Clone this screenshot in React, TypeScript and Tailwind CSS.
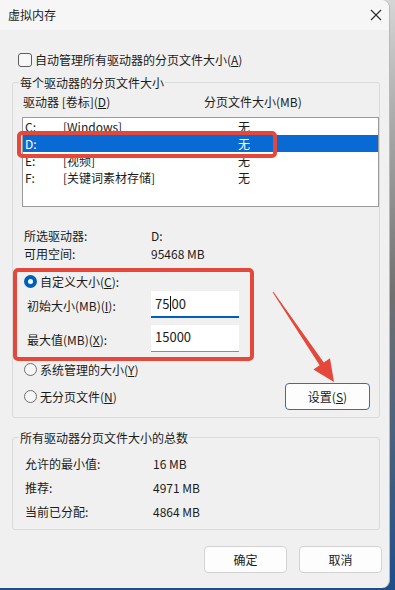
import React from "react";

const font = { fontFamily: '"Noto Sans CJK SC", "Noto Sans", sans-serif' };

function Radio({ checked }: { checked?: boolean }) {
  if (checked) {
    return (
      <span className="flex h-[13px] w-[13px] items-center justify-center rounded-full bg-[#005fb8]">
        <span className="h-[5px] w-[5px] rounded-full bg-white" />
      </span>
    );
  }
  return <span className="h-[13px] w-[13px] rounded-full border border-[#6e6e6e] bg-[#f7f7f7]" />;
}

function Btn({ label, primary }: { label: React.ReactNode; primary?: boolean }) {
  return (
    <div
      className={
        "flex h-[27px] items-center justify-center rounded-[4px] border bg-[#fdfdfd] " +
        (primary ? "w-[85px] border-[#3f6f8e]" : "w-[83px] border-[#d3d3d3]")
      }
    >
      {label}
    </div>
  );
}

const drives = [
  { d: "C:", v: "[Windows]", s: "无" },
  { d: "D:", v: "", s: "无", sel: true },
  { d: "E:", v: "[视频]", s: "无" },
  { d: "F:", v: "[关键词素材存储]", s: "无" },
];

export default function App() {
  return (
    <div className="h-[590px] w-[395px] overflow-hidden bg-gradient-to-b from-[#d6d6d6] via-[#707070] to-[#1d4e89]">
      <div
        className="relative h-[588px] w-[390px] rounded-r-[8px] border-r border-[#b8b8b8] bg-[#f0f0f0] text-[12px] text-[#1b1b1b]"
        style={font}
      >
        {/* title bar */}
        <div className="flex h-[30px] items-center justify-between rounded-tr-[8px] bg-[#f6f6f6] pl-[8px] pr-[5px] text-[12px]">
          <span>虚拟内存</span>
          <svg width="14" height="14" viewBox="0 0 14 14" className="mr-[1px]">
            <path d="M2 2 L12 12 M12 2 L2 12" stroke="#2a2a2a" strokeWidth="1.1" />
          </svg>
        </div>

        {/* auto manage */}
        <div className="ml-[18px] mt-[21px] flex h-[17px] items-center gap-[3px] leading-[17px]">
          <span className="h-[14px] w-[14px] rounded-[3px] border border-[#5c5c5c] bg-[#f7f7f7]" />
          <span>
            自动管理所有驱动器的分页文件大小(<span className="underline">A</span>)
          </span>
        </div>

        {/* group 1 */}
        <div className="relative ml-[12px] mt-[14px] h-[336px] w-[368px] rounded-[3px] border border-[#dadada]">
          <span className="absolute -top-[9px] left-[6px] bg-[#f0f0f0] px-[1px] leading-[17px]">每个驱动器的分页文件大小</span>

          <div className="ml-[10px] mt-[11px] flex h-[16px] items-center leading-[16px]">
            <span className="w-[181px]">
              驱动器 [卷标](<span className="underline">D</span>)
            </span>
            <span>分页文件大小(MB)</span>
          </div>

          <div className="ml-[9px] mt-[7px] h-[90px] w-[357px] border border-[#9a9a9a] bg-white">
            {drives.map((r) => (
              <div
                key={r.d}
                className={
                  "flex h-[17px] items-center pl-[2px] leading-[17px] " +
                  (r.sel ? "bg-[#0a6ad3] text-white" : "text-[#1b1b1b]")
                }
              >
                <span className="w-[38px]">{r.d}</span>
                <span className="w-[175px]">{r.v}</span>
                <span>{r.s}</span>
              </div>
            ))}
          </div>

          <div className="ml-[11px] mt-[20px] flex h-[18px] items-center leading-[18px]">
            <span className="w-[127px]">所选驱动器:</span>
            <span>D:</span>
          </div>
          <div className="ml-[11px] flex h-[18px] items-center leading-[18px]">
            <span className="w-[127px]">可用空间:</span>
            <span>95468 MB</span>
          </div>

          <div className="ml-[11px] mt-[10px] flex h-[17px] items-center gap-[3px] leading-[17px]">
            <Radio checked />
            <span>
              自定义大小(<span className="underline">C</span>):
            </span>
          </div>

          <div className="ml-[14px] mt-[1px] flex h-[27px] items-center">
            <span className="w-[124px] pt-[3px]">
              初始大小(MB)(<span className="underline">I</span>):
            </span>
            <div className="flex h-[27px] w-[88px] items-center border-b-2 border-[#005fb8] bg-white pl-[4px] text-[13px]">
              75<span className="mx-[0.5px] inline-block h-[15px] w-px bg-[#111]" />00
            </div>
          </div>

          <div className="ml-[14px] mt-[7px] flex h-[27px] items-center">
            <span className="w-[124px] pt-[2px]">
              最大值(MB)(<span className="underline">X</span>):
            </span>
            <div className="flex h-[27px] w-[88px] items-center border-b border-[#8c8c8c] bg-white pb-[2px] pl-[4px] text-[13px]">
              15000
            </div>
          </div>

          <div className="ml-[11px] mt-[9px] flex h-[17px] items-center gap-[3px] leading-[17px]">
            <Radio />
            <span>
              系统管理的大小(<span className="underline">Y</span>)
            </span>
          </div>

          <div className="mr-[9px] ml-[11px] mt-[5px] flex h-[27px] items-center">
            <div className="flex items-center gap-[3px]">
              <Radio />
              <span>
                无分页文件(<span className="underline">N</span>)
              </span>
            </div>
            <div className="ml-auto">
              <Btn
                primary
                label={
                  <span>
                    设置(<span className="underline">S</span>)
                  </span>
                }
              />
            </div>
          </div>
        </div>

        {/* group 2 */}
        <div className="relative ml-[12px] mt-[19px] h-[93px] w-[368px] rounded-[3px] border border-[#dadada] pt-[14px]">
          <span className="absolute -top-[9px] left-[6px] bg-[#f0f0f0] px-[1px] leading-[17px]">所有驱动器分页文件大小的总数</span>
          {[
            ["允许的最小值:", "16 MB"],
            ["推荐:", "4971 MB"],
            ["当前已分配:", "4864 MB"],
          ].map(([k, v]) => (
            <div key={k} className="ml-[12px] flex h-[24px] items-center leading-[24px]">
              <span className="w-[128px]">{k}</span>
              <span>{v}</span>
            </div>
          ))}
        </div>

        {/* footer buttons */}
        <div className="mr-[7px] mt-[16px] flex justify-end gap-[12px]">
          <Btn label="确定" />
          <Btn label="取消" />
        </div>

        {/* red annotations */}
        <div className="pointer-events-none absolute left-[17px] top-[131px] h-[27px] w-[260px] rounded-[5px] border-[4px] border-[#e5473b]" />
        <div className="pointer-events-none absolute left-[13px] top-[268px] h-[93px] w-[241px] rounded-[5px] border-[4px] border-[#e5473b]" />
        <svg className="pointer-events-none absolute left-0 top-0" width="390" height="588">
          <polygon
            points="273.4,291.7 323.8,362.4 330,358.2 334,382 313.4,369.4 319.6,365.2 272.6,292.3"
            fill="#e5473b"
          />
        </svg>
      </div>
    </div>
  );
}
